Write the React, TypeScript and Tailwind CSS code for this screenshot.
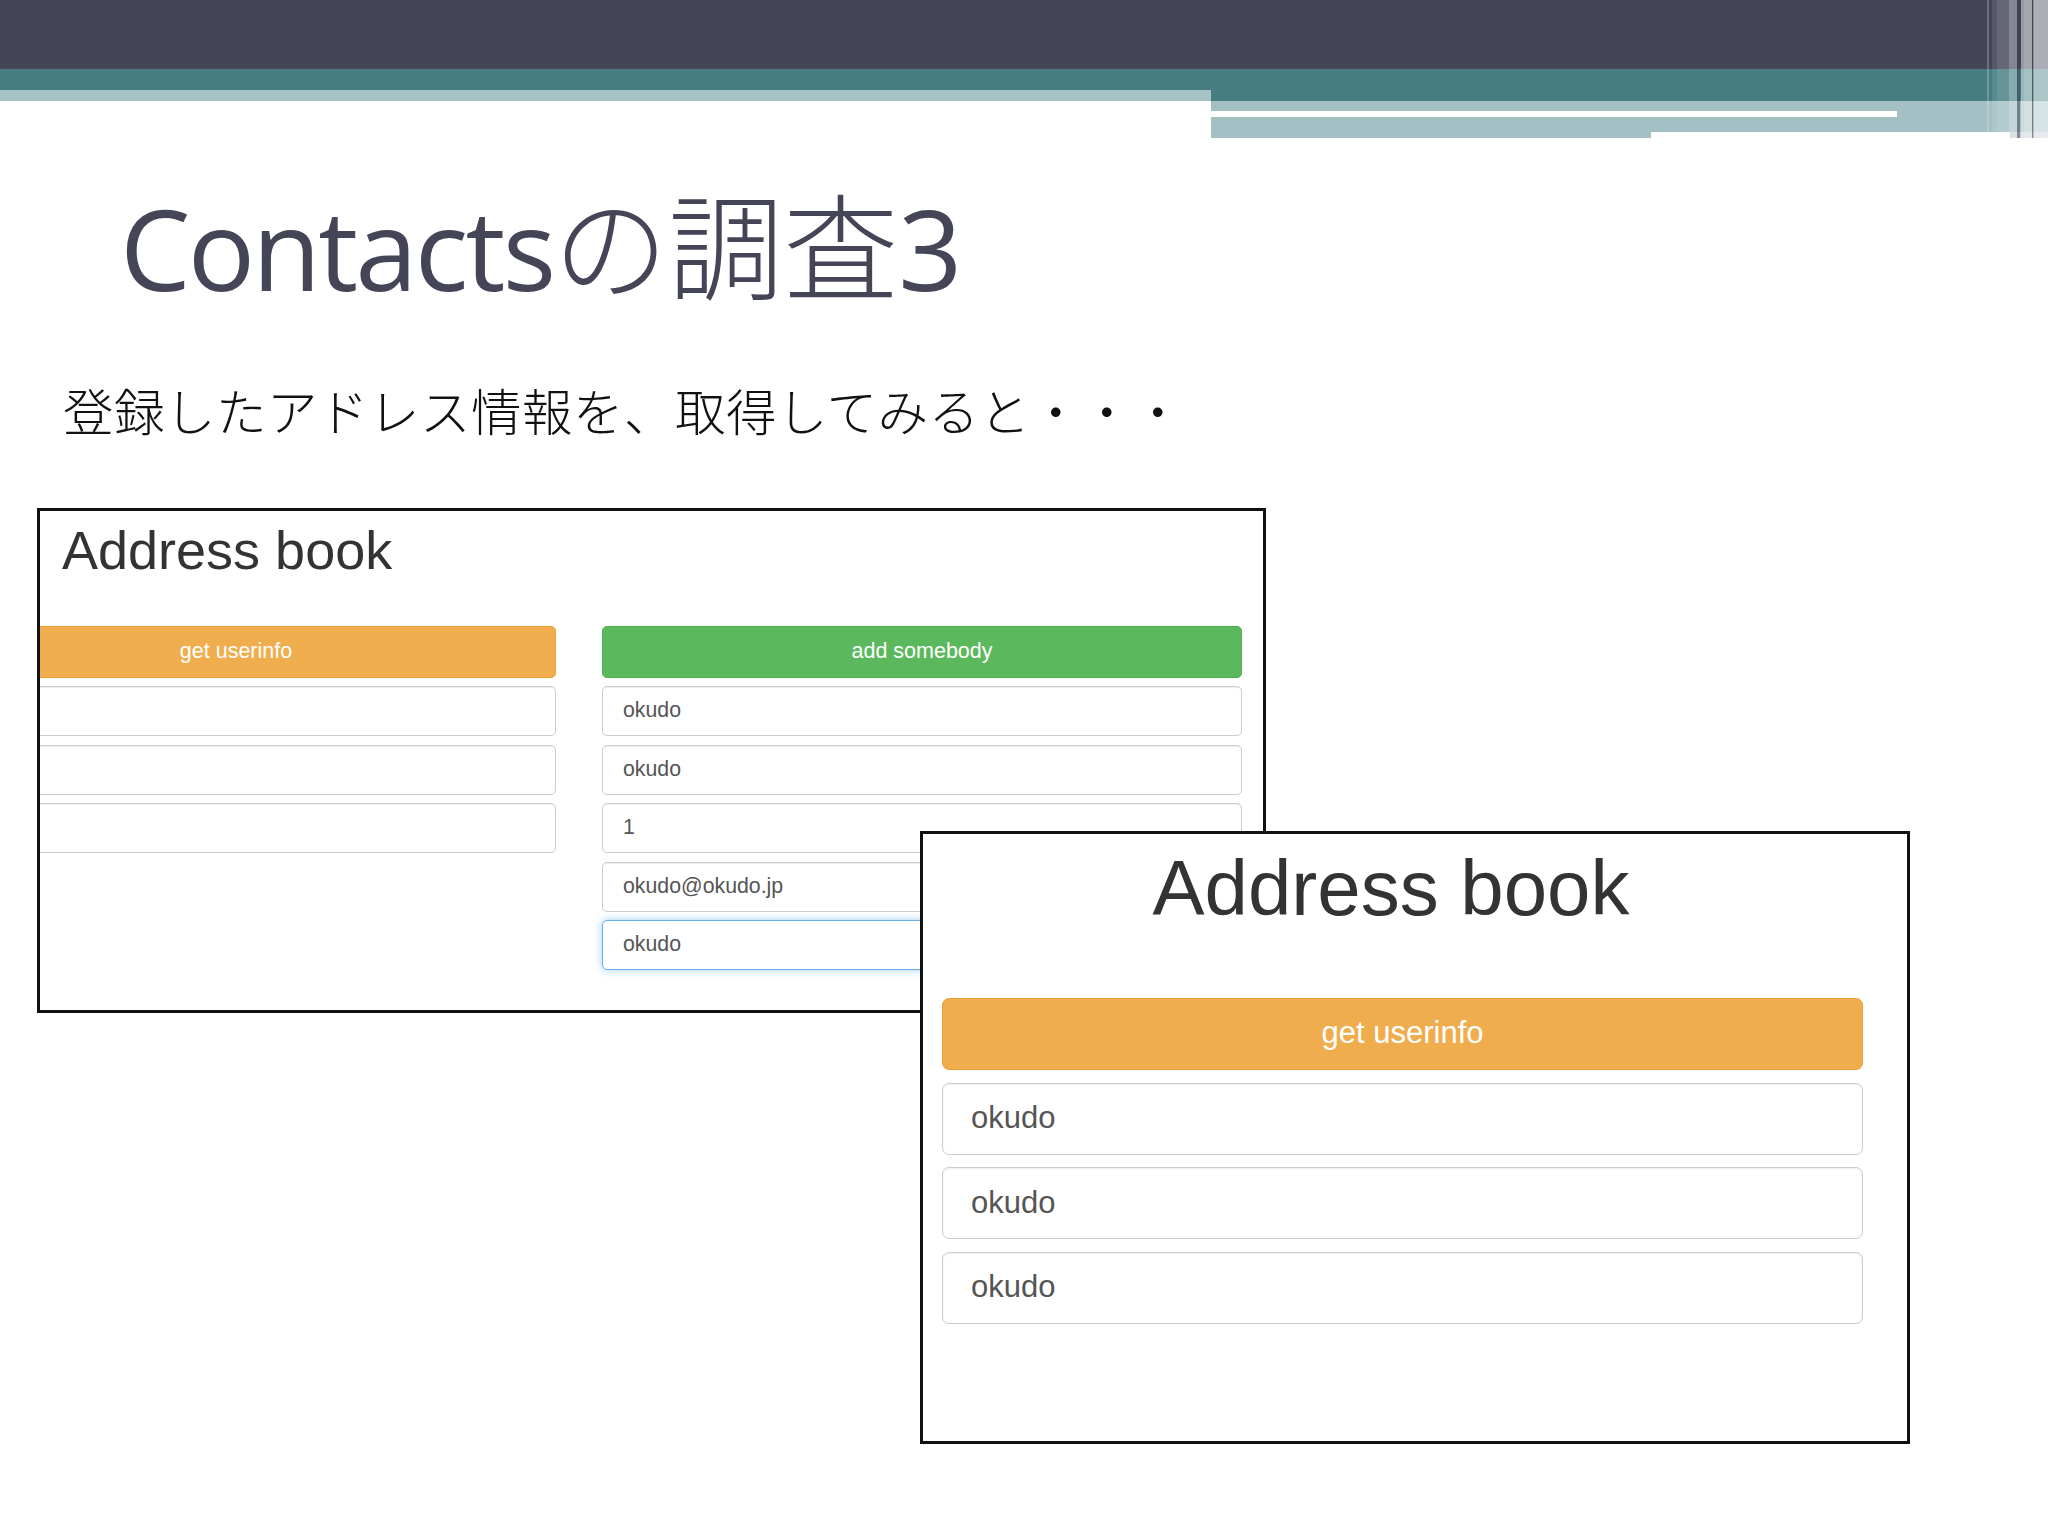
const SANS = "font-['Liberation_Sans',Arial,sans-serif]";

const stripes: [number, number, number][] = [
  [1987, 2, 0.22],
  [1992, 5, 0.1],
  [1997, 12, 0.18],
  [2009, 8, 0.35],
  [2021, 3, 0.45],
  [2024, 8, 0.52],
  [2033, 15, 0.56],
];

function HeaderBands() {
  return (
    <svg width="2048" height="140" viewBox="0 0 2048 140" className="block">
      <rect x="0" y="0" width="2048" height="69" fill="#454558" />
      <rect x="0" y="69" width="2048" height="21" fill="#457d83" />
      <rect x="1211" y="90" width="837" height="11" fill="#457d83" />
      <rect x="0" y="90" width="1211" height="11" fill="#a5c3c7" />
      <rect x="1211" y="101" width="837" height="31" fill="#a3c1c5" />
      <rect x="1211" y="132" width="440" height="6" fill="#a3c1c5" />
      <rect x="1211" y="111" width="686" height="6" fill="#ffffff" />
      <rect x="2010" y="132" width="38" height="6" fill="#c9d2d8" />
      {stripes.map(([x, w, o]) => (
        <rect key={x} x={x} y="0" width={w} height={x >= 2009 ? 138 : 132} fill="#ffffff" opacity={o} />
      ))}
      <rect x="2017" y="0" width="3" height="138" fill="#3f3f52" opacity="0.5" />
      <rect x="2032" y="0" width="1.5" height="138" fill="#3f3f52" opacity="0.5" />
    </svg>
  );
}

function SmallInput({ value, focused }: { value?: string; focused?: boolean }) {
  return (
    <div
      className={`flex h-[50px] items-center rounded-[5px] border bg-white pl-[20px] text-[21.3px] text-[#555] ${SANS} ${
        focused
          ? "border-[#66afe9] shadow-[0_0_8px_rgba(102,175,233,0.6)]"
          : "border-[#cccccc] shadow-[inset_0_1px_1px_rgba(0,0,0,0.075)]"
      }`}
    >
      {value}
    </div>
  );
}

function BigInput({ value }: { value: string }) {
  return (
    <div
      className={`flex h-[72px] items-center rounded-[7px] border border-[#cccccc] bg-white pl-[28px] text-[31px] text-[#555] shadow-[inset_0_1px_2px_rgba(0,0,0,0.075)] ${SANS}`}
    >
      {value}
    </div>
  );
}

export default function App() {
  return (
    <div className="relative h-[1536px] w-[2048px] overflow-hidden bg-white">
      <HeaderBands />

      <h1 className="mt-[44px] h-[112px] pl-[120px] font-['Open_Sans','Noto_Sans_CJK_JP',sans-serif] text-[112px] font-medium leading-none tracking-[-0.025em] text-[#454558]">
        Contacts
        <span className="font-['Noto_Sans_CJK_JP',sans-serif] text-[115px] font-light leading-none tracking-normal">
          の調査
        </span>
        3
      </h1>

      <p className="mt-[88px] pl-[63px] font-['Noto_Sans_CJK_JP',sans-serif] text-[50.5px] font-light leading-none tracking-[0.01em] text-[#111]">
        登録したアドレス情報を、取得してみると・・・
      </p>

      <div className="relative mt-[73px] pl-[37px]">
        {/* first screenshot */}
        <div className="h-[505px] w-[1229px] overflow-hidden border-[3px] border-[#111] bg-white">
          <div className={`pl-[22px] pt-[12px] text-[54px] leading-none text-[#333] ${SANS}`}>
            Address book
          </div>
          <div className="ml-[-124px] mt-[49px] flex gap-[46px]">
            <div className="flex w-[640px] flex-col gap-[8.5px]">
              <div
                className={`flex h-[52px] items-center justify-center rounded-[5px] border border-[#eea236] bg-[#f0ad4e] text-[21.5px] text-white ${SANS}`}
              >
                get userinfo
              </div>
              <SmallInput />
              <SmallInput />
              <SmallInput />
            </div>
            <div className="flex w-[640px] flex-col gap-[8.5px]">
              <div
                className={`flex h-[52px] items-center justify-center rounded-[5px] border border-[#4cae4c] bg-[#5cb85c] text-[21.5px] text-white ${SANS}`}
              >
                add somebody
              </div>
              <SmallInput value="okudo" />
              <SmallInput value="okudo" />
              <SmallInput value="1" />
              <SmallInput value="okudo@okudo.jp" />
              <SmallInput value="okudo" focused />
            </div>
          </div>
        </div>

        {/* second screenshot, laid over the first */}
        <div className="absolute left-[920px] top-[323px] h-[613px] w-[990px] border-[3px] border-[#111] bg-white pl-[19px] pr-[44px] pt-[15px]">
          <div className={`pr-[23px] text-center text-[78px] leading-none text-[#333] ${SANS}`}>
            Address book
          </div>
          <div
            className={`mt-[71px] flex h-[72px] items-center justify-center rounded-[7px] border border-[#eea236] bg-[#f0ad4e] text-[31px] text-white ${SANS}`}
          >
            get userinfo
          </div>
          <div className="mt-[13px] flex flex-col gap-[12.5px]">
            <BigInput value="okudo" />
            <BigInput value="okudo" />
            <BigInput value="okudo" />
          </div>
        </div>
      </div>
    </div>
  );
}
